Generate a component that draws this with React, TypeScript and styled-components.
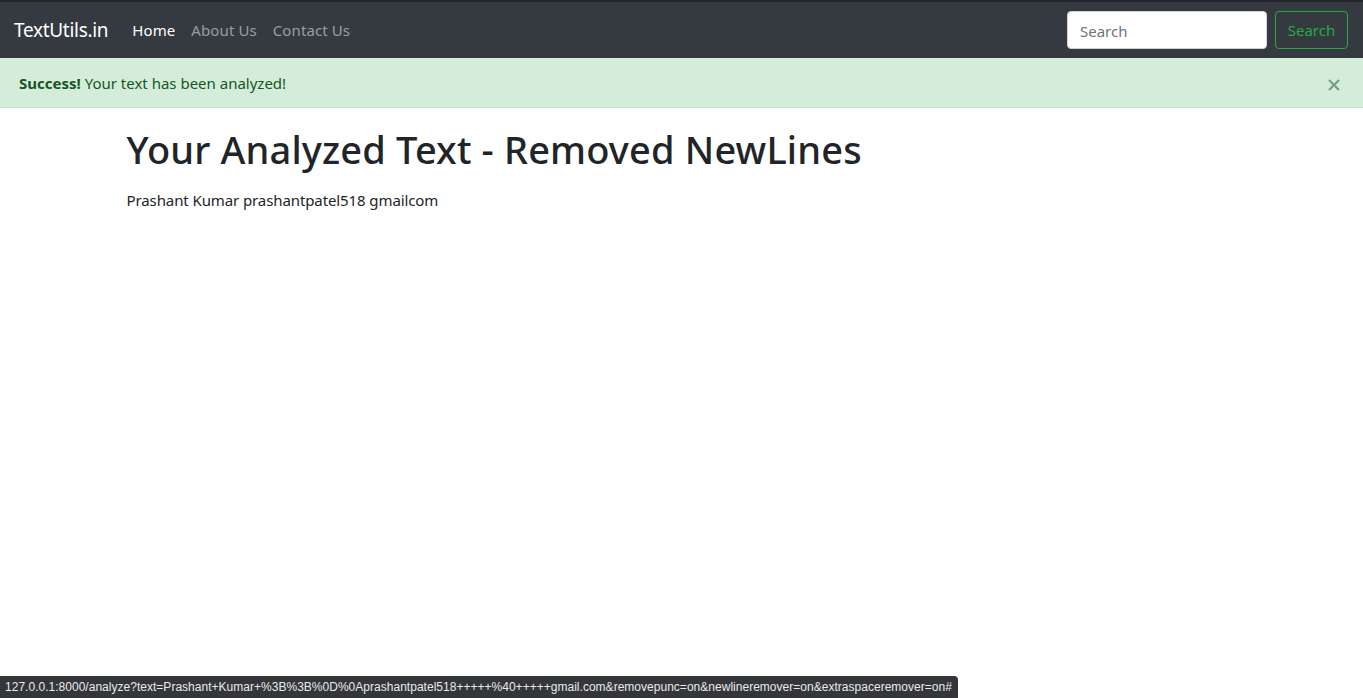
import React from "react";
import styled, { createGlobalStyle } from "styled-components";

const Global = createGlobalStyle`
  html, body { margin: 0; padding: 0; background: #fff; }
  body {
    font-family: "Noto Sans", "Open Sans", sans-serif;
    font-size: 16px;
    line-height: 1.5;
    color: #212529;
  }
  * { box-sizing: border-box; }
`;

const TopEdge = styled.div`
  height: 2px;
  background: #23272b;
`;

const Navbar = styled.nav`
  display: flex;
  align-items: center;
  height: 56px;
  padding: 0 15px 0 14px;
  background: #343a40;
`;

const Brand = styled.a`
  font-size: 19px;
  color: #fff;
  margin-right: 16px;
  text-decoration: none;
  letter-spacing: -0.3px;
`;

const NavList = styled.ul`
  display: flex;
  list-style: none;
  margin: 0;
  padding: 0;
  flex: 1;
`;

const NavLink = styled.a<{ $active?: boolean }>`
  display: block;
  padding: 8px;
  font-size: 15px;
  letter-spacing: 0.1px;
  color: ${(p) => (p.$active ? "#fff" : "rgba(255,255,255,0.5)")};
  text-decoration: none;
`;

const SearchForm = styled.form`
  display: flex;
  align-items: center;
  gap: 8px;
`;

const SearchInput = styled.input`
  width: 200px;
  height: 38px;
  padding: 7px 12px 5px;
  font-family: inherit;
  font-size: 15px;
  color: #495057;
  background: #fff;
  border: 1px solid #ced4da;
  border-radius: 4px;
  &::placeholder { color: #6c757d; }
`;

const OutlineButton = styled.button`
  height: 38px;
  width: 73px;
  font-family: inherit;
  font-size: 15px;
  color: #28a745;
  background: transparent;
  border: 1px solid #28a745;
  border-radius: 4px;
`;

const Alert = styled.div`
  display: flex;
  align-items: center;
  justify-content: space-between;
  height: 50px;
  padding: 1px 23px 0 19px;
  background: #d4edda;
  border-bottom: 1px solid #c3e6cb;
  color: #155724;
  font-size: 15px;
  letter-spacing: 0;
`;

const Close = styled.button`
  background: none;
  border: 0;
  padding: 0;
  margin-top: 4px;
  color: #155724;
  opacity: 0.5;
  display: flex;
`;

const Container = styled.main`
  max-width: 1140px;
  margin: 0 auto;
  padding: 0 15px;
`;

const Heading = styled.h1`
  margin: 19px 0 16px;
  font-size: 38px;
  font-weight: 500;
  line-height: 1.2;
  letter-spacing: 0.15px;
`;

const Output = styled.p`
  margin: 0;
  font-size: 15px;
  letter-spacing: -0.1px;
`;

const StatusBar = styled.div`
  position: fixed;
  left: 0;
  bottom: 0;
  width: 958px;
  height: 22px;
  padding: 0 5px;
  display: flex;
  align-items: center;
  background: #35363a;
  color: #e8eaed;
  border-top-right-radius: 4px;
  font-family: "Liberation Sans", sans-serif;
  font-size: 12px;
  letter-spacing: 0.02px;
  white-space: nowrap;
  overflow: hidden;
`;

export default function App() {
  return (
    <>
      <Global />
      <TopEdge />
      <Navbar>
        <Brand href="#">TextUtils.in</Brand>
        <NavList>
          <li><NavLink $active href="#">Home</NavLink></li>
          <li><NavLink href="#">About Us</NavLink></li>
          <li><NavLink href="#">Contact Us</NavLink></li>
        </NavList>
        <SearchForm onSubmit={(e) => e.preventDefault()}>
          <SearchInput type="search" placeholder="Search" />
          <OutlineButton type="submit">Search</OutlineButton>
        </SearchForm>
      </Navbar>
      <Alert>
        <span>
          <strong>Success!</strong> Your text has been analyzed!
        </span>
        <Close aria-label="Close">
          <svg width="12" height="12" viewBox="0 0 12 12">
            <path d="M1 1 L11 11 M11 1 L1 11" stroke="currentColor" strokeWidth="2.2" />
          </svg>
        </Close>
      </Alert>
      <Container>
        <Heading>Your Analyzed Text - Removed NewLines</Heading>
        <Output>Prashant Kumar prashantpatel518 gmailcom</Output>
      </Container>
      <StatusBar>
        127.0.0.1:8000/analyze?text=Prashant+Kumar+%3B%3B%0D%0Aprashantpatel518+++++%40+++++gmail.com&amp;removepunc=on&amp;newlineremover=on&amp;extraspaceremover=on#
      </StatusBar>
    </>
  );
}
